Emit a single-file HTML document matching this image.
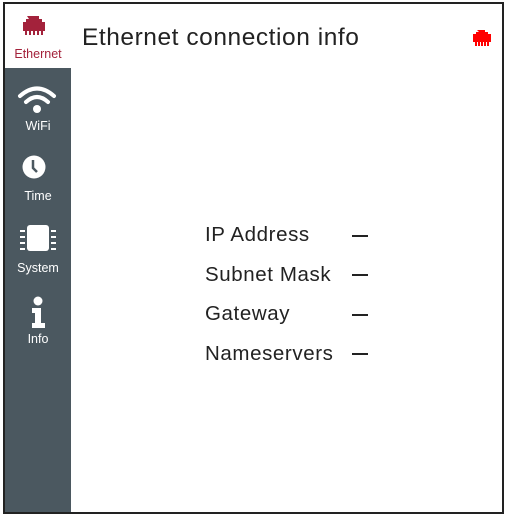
<!DOCTYPE html>
<html><head><style>
html,body{margin:0;padding:0;background:#fff;}
body{width:505px;height:516px;position:relative;overflow:hidden;font-family:"Liberation Sans",sans-serif;}
.frame{position:absolute;left:3px;top:2px;width:497px;height:508px;border:2px solid #222;}
.side{position:absolute;left:5px;top:4px;width:66px;height:508px;background:#4b5860;}
.tab0{position:absolute;left:5px;top:4px;width:66px;height:64px;background:#fff;}
.lbl{position:absolute;left:5px;width:66px;text-align:center;font-size:12.5px;color:#fff;}
.t{position:absolute;font-size:20.5px;letter-spacing:0.6px;color:#222;}
.d{position:absolute;left:352px;width:16px;height:2px;background:#222;}
</style></head><body>
<div class="frame"></div>
<div class="side"></div>
<div class="tab0"></div>
<svg width="505" height="516" style="position:absolute;left:0;top:0">
<path d="M27 16h12v3h3v3h3v9h-2v4h-2v-4h-2v4h-2v-4h-2v4h-2v-4h-2v4h-2v-4h-2v4h-2v-4h-2v-9h3v-3h3z" fill="#a3223b"/>
<path d="M477 30h8v2h3v2h3v8h-2v4h-2v-4h-1v4h-2v-4h-1v4h-2v-4h-1v4h-2v-4h-1v4h-2v-4h-2v-8h3v-2h3z" fill="#ff0000"/>
<g fill="none" stroke="#fff" stroke-width="4" stroke-linecap="round">
<path d="M20 96 Q37 81 54 96"/>
<path d="M26 102 Q37 92 48 102"/>
</g>
<circle cx="37" cy="109" r="4" fill="#fff"/>
<circle cx="34" cy="167" r="11.5" fill="#fff"/>
<path d="M33 160v8l4 4" fill="none" stroke="#4b5860" stroke-width="2.5"/>
<rect x="27" y="225" width="22" height="26" rx="3" fill="#fff"/>
<g fill="#fff">
<rect x="20" y="230" width="5" height="2"/><rect x="20" y="236" width="5" height="2"/><rect x="20" y="242" width="5" height="2"/><rect x="20" y="248" width="5" height="2"/>
<rect x="51" y="230" width="5" height="2"/><rect x="51" y="236" width="5" height="2"/><rect x="51" y="242" width="5" height="2"/><rect x="51" y="248" width="5" height="2"/>
</g>
<circle cx="38" cy="301" r="4.5" fill="#fff"/>
<path d="M32 308h9v15h4v5h-13v-5h3v-10h-3z" fill="#fff"/>
</svg>
<div class="lbl" style="top:47px;color:#a3223b;">Ethernet</div>
<div class="lbl" style="top:119px;">WiFi</div>
<div class="lbl" style="top:189px;">Time</div>
<div class="lbl" style="top:261px;">System</div>
<div class="lbl" style="top:332px;">Info</div>
<div style="position:absolute;left:82px;top:24px;font-size:24.5px;letter-spacing:0.55px;color:#222;">Ethernet connection info</div>
<div class="t" style="left:205px;top:223px;">IP Address</div>
<div class="t" style="left:205px;top:263px;">Subnet Mask</div>
<div class="t" style="left:205px;top:302px;">Gateway</div>
<div class="t" style="left:205px;top:342px;">Nameservers</div>
<div class="d" style="top:235px"></div>
<div class="d" style="top:274px"></div>
<div class="d" style="top:314px"></div>
<div class="d" style="top:353px"></div>
</body></html>
